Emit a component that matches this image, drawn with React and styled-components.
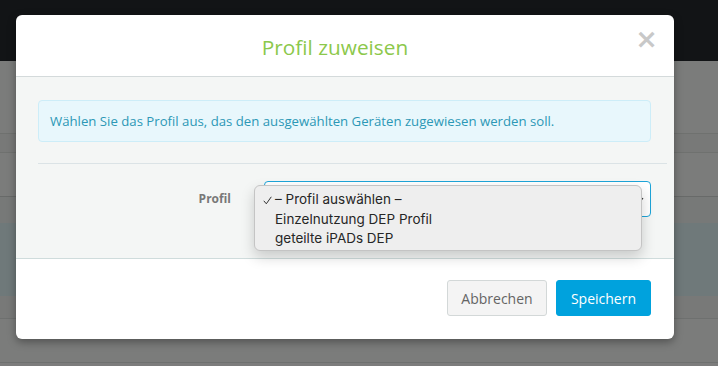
import React from "react";
import styled, { createGlobalStyle } from "styled-components";

const Global = createGlobalStyle`
  html, body { margin: 0; padding: 0; }
  body { width: 718px; height: 366px; overflow: hidden; font-family: "Open Sans", "Liberation Sans", sans-serif; }
`;

const Page = styled.div`
  position: relative;
  width: 718px;
  height: 366px;
  display: flex;
  flex-direction: column;
  background: #7c7c7c;
`;

const TopBar = styled.div`
  height: 61px;
  background: #121416;
  flex: none;
`;

const BgRow = styled.div`
  height: ${(p) => p.$h}px;
  background: ${(p) => p.$bg || "#7b7c7b"};
  border-bottom: 1px solid ${(p) => p.$line || "transparent"};
  flex: none;
`;

const Modal = styled.div`
  position: absolute;
  left: 16px;
  top: 15px;
  width: 658px;
  background: #fff;
  border-radius: 6px;
  box-shadow: 0 3px 8px rgba(0, 0, 0, 0.35);
  display: flex;
  flex-direction: column;
`;

const Header = styled.div`
  height: 61px;
  padding: 0 20px 0 15px;
  border-bottom: 1px solid #d4dadb;
  display: flex;
  align-items: center;
`;

const Title = styled.h4`
  flex: 1;
  text-align: center;
  margin: 0;
  font-family: "Open Sans", sans-serif;
  font-weight: 400;
  font-size: 20.8px;
  color: #8cc84b;
  padding-top: 2px;
`;

const Close = styled.button`
  align-self: flex-start;
  margin-top: 12px;
  width: 15px;
  border: 0;
  background: none;
  padding: 0;
  display: flex;
  justify-content: center;
  font-family: "DejaVu Sans", sans-serif;
  font-weight: 700;
  font-size: 27px;
  line-height: 24px;
  color: #c8c8c8;
`;

const Body = styled.div`
  background: #f4f6f5;
  padding: 23px 7px 0 22px;
  height: 182px;
  box-sizing: border-box;
  border-bottom: 1px solid #cfdcdc;
  display: flex;
  flex-direction: column;
`;

const Alert = styled.div`
  margin-right: 16px;
  height: 42px;
  box-sizing: border-box;
  background: #e8f7fc;
  border: 1px solid #cdedf8;
  border-radius: 4px;
  padding: 0 11px 1px;
  display: flex;
  align-items: center;
  font-size: 13.2px;
  color: #2c98b6;
`;

const Divider = styled.hr`
  margin: 21px 0 0 0;
  border: 0;
  border-top: 1px solid #dbe3e6;
`;

const FormRow = styled.div`
  position: relative;
  margin-top: 17px;
  display: flex;
  align-items: center;
`;

const Label = styled.label`
  width: 193px;
  text-align: right;
  font-size: 12px;
  font-weight: 700;
  color: #787878;
  padding-right: 33px;
  padding-bottom: 2px;
`;

const SelectBox = styled.div`
  width: 387px;
  height: 36px;
  box-sizing: border-box;
  border: 1px solid #1ea4d8;
  border-radius: 4px;
  background: #fff;
  position: relative;
`;

const Caret = styled.svg`
  position: absolute;
  right: 6px;
  top: 13px;
`;

const Popup = styled.div`
  position: absolute;
  left: 216px;
  top: 4px;
  width: 388px;
  height: 66px;
  box-sizing: border-box;
  background: #eeeeee;
  border: 1px solid #c4c4c4;
  border-radius: 6px;
  box-shadow: 0 6px 14px rgba(0, 0, 0, 0.18);
  padding: 4px 0 0 0;
  display: flex;
  flex-direction: column;
  font-family: "Inter", "Roboto", sans-serif;
  font-size: 13.5px;
  color: #262626;
`;

const Option = styled.div`
  position: relative;
  height: 19.5px;
  line-height: 19.5px;
  display: flex;
  align-items: center;
`;

const Check = styled.svg`
  position: absolute;
  left: 8px;
  top: 6px;
`;

const OptionText = styled.span`
  margin-left: 20px;
`;

const Footer = styled.div`
  height: 80px;
  display: flex;
  justify-content: flex-end;
  align-items: flex-start;
  padding: 21px 23px 0 0;
  gap: 9px;
  box-sizing: border-box;
`;

const Button = styled.button`
  height: 36px;
  width: ${(p) => (p.$primary ? 95 : 100)}px;
  box-sizing: border-box;
  padding: 0;
  border-radius: 3px;
  font-family: "Open Sans", sans-serif;
  font-size: 14px;
  border: 1px solid ${(p) => (p.$primary ? "#00a2dd" : "#d3d8d8")};
  background: ${(p) => (p.$primary ? "#00a2dd" : "#f4f4f4")};
  color: ${(p) => (p.$primary ? "#fff" : "#646464")};
`;

export default function App() {
  return (
    <>
      <Global />
      <Page>
        <TopBar />
        <BgRow $h={72} $line="#6f716f" />
        <BgRow $h={18} $bg="#787978" $line="#6f716f" />
        <BgRow $h={43} $line="#686a69" />
        <BgRow $h={25} $bg="#777978" />
        <BgRow $h={72} $bg="#6f797a" />
        <BgRow $h={22} $bg="#787978" $line="#6e706f" />
        <BgRow $h={43} $line="#6e706f" />
        <Modal>
          <Header>
            <Title>Profil zuweisen</Title>
            <Close aria-label="close">×</Close>
          </Header>
          <Body>
            <Alert>Wählen Sie das Profil aus, das den ausgewählten Geräten zugewiesen werden soll.</Alert>
            <Divider />
            <FormRow>
              <Label>Profil</Label>
              <SelectBox>
                <Caret width="6" height="8" viewBox="0 0 6 8">
                  <path d="M1 3 L3 5.5 L5 3" stroke="#333" strokeWidth="1.2" fill="none" />
                </Caret>
              </SelectBox>
              <Popup>
                <Option>
                  <Check width="9" height="9" viewBox="0 0 9 9">
                    <path d="M0.8 4.8 L3.3 7.8 L8.3 0.8" stroke="#333" strokeWidth="1" fill="none" />
                  </Check>
                  <OptionText>– Profil auswählen –</OptionText>
                </Option>
                <Option>
                  <OptionText>Einzelnutzung DEP Profil</OptionText>
                </Option>
                <Option>
                  <OptionText>geteilte iPADs DEP</OptionText>
                </Option>
              </Popup>
            </FormRow>
          </Body>
          <Footer>
            <Button>Abbrechen</Button>
            <Button $primary>Speichern</Button>
          </Footer>
        </Modal>
      </Page>
    </>
  );
}
